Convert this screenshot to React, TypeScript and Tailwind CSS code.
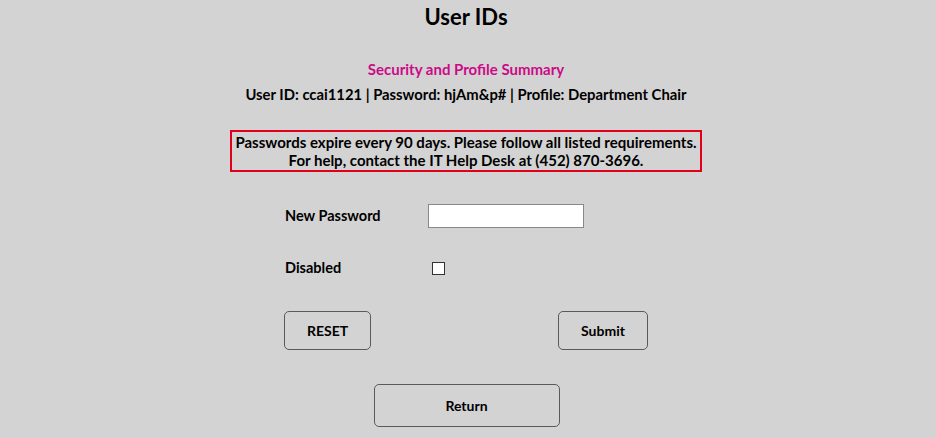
export default function App() {
  return (
    <div className="w-[936px] h-[438px] bg-[#d3d3d3] overflow-hidden" style={{ fontFamily: "Lato, 'Noto Sans', sans-serif" }}>
      <div className="w-[932px] flex flex-col items-center">
        <h1 className="pt-[4px] text-[22px] leading-[26px] font-bold text-black">User IDs</h1>
        <div className="mt-[29px] text-[15px] leading-[20px] font-bold text-[#cc0a88]">Security and Profile Summary</div>
        <div className="mt-[5px] text-[14.8px] leading-[20px] font-bold text-black">User ID: ccai1121 | Password: hjAm&amp;p# | Profile: Department Chair</div>
        <div className="mt-[26px] w-[472px] border-2 border-[#e0001b] py-[1px] text-center text-[15px] leading-[18px] font-bold text-black">
          <div>Passwords expire every 90 days. Please follow all listed requirements.</div>
          <div>For help, contact the IT Help Desk at (452) 870-3696.</div>
        </div>
        <div className="mt-[32px] w-[364px] flex flex-col">
          <div className="flex items-center h-[24px]">
            <div className="w-[144px] pl-[1px] text-[14.5px] font-bold text-black">New Password</div>
            <div className="w-[156px] h-[24px] bg-white border border-[#888]" />
          </div>
          <div className="mt-[28px] flex items-center h-[24px]">
            <div className="w-[144px] pl-[1px] text-[14.5px] font-bold text-black">Disabled</div>
            <div className="ml-[4px] w-[13px] h-[13px] bg-white border border-[#333]" />
          </div>
          <div className="mt-[31px] flex justify-between">
            <button className="w-[87px] h-[39px] rounded-[5px] border border-[#5a5a5a] text-[14px] font-bold text-black">RESET</button>
            <button className="w-[90px] h-[39px] rounded-[5px] border border-[#5a5a5a] text-[14px] font-bold text-black">Submit</button>
          </div>
        </div>
        <button className="mt-[34px] ml-[1px] w-[186px] h-[43px] rounded-[5px] border border-[#5a5a5a] text-[14px] font-bold text-black">Return</button>
      </div>
    </div>
  );
}
